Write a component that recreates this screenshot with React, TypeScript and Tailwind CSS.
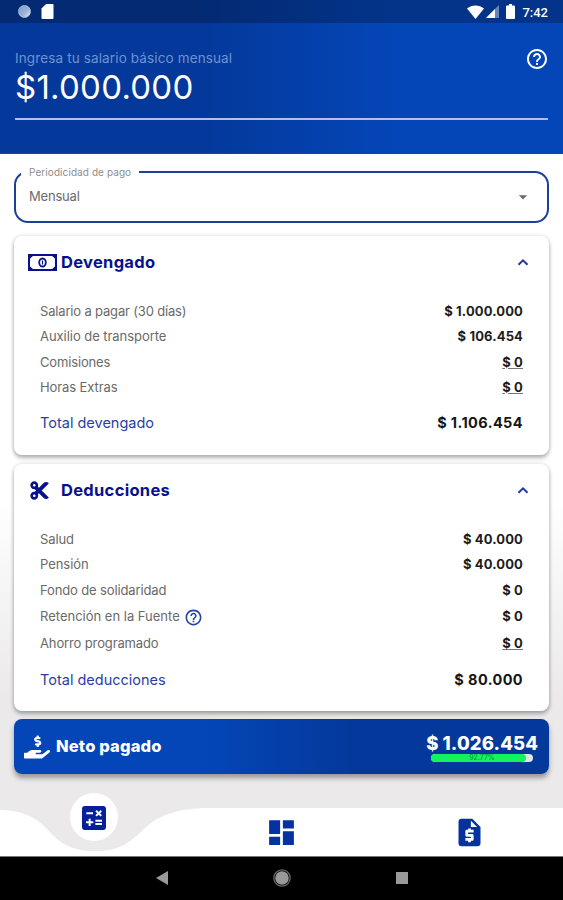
import React from "react";
import clsx from "clsx";
import { FaCut, FaHandHoldingUsd } from "react-icons/fa";
import {
  MdArrowDropDown,
  MdCalculate,
  MdDashboard,
  MdHelpOutline,
  MdRequestQuote,
} from "react-icons/md";

type Item = {
  label: string;
  value: string;
  link?: boolean;
  help?: boolean;
  height: string;
  tracking: string;
};

const earnings: Item[] = [
  { label: "Salario a pagar (30 días)", value: "$ 1.000.000", height: "h-[25px]", tracking: "tracking-[-0.17px]" },
  { label: "Auxilio de transporte", value: "$ 106.454", height: "h-[26px]", tracking: "tracking-[-0.05px]" },
  { label: "Comisiones", value: "$ 0", link: true, height: "h-[25px]", tracking: "tracking-[-0.15px]" },
  { label: "Horas Extras", value: "$ 0", link: true, height: "h-[25px]", tracking: "tracking-[-0.1px]" },
];

const deductions: Item[] = [
  { label: "Salud", value: "$ 40.000", height: "h-[25px]", tracking: "tracking-[-0.1px]" },
  { label: "Pensión", value: "$ 40.000", height: "h-[26px]", tracking: "tracking-[-0.05px]" },
  { label: "Fondo de solidaridad", value: "$ 0", height: "h-[25px]", tracking: "tracking-[-0.13px]" },
  { label: "Retención en la Fuente", value: "$ 0", help: true, height: "h-[28px]", tracking: "tracking-[0px]" },
  { label: "Ahorro programado", value: "$ 0", link: true, height: "h-[26px]", tracking: "tracking-[-0.13px]" },
];

export default function App() {
  return (
    <div className="flex h-[900px] w-[563px] flex-col overflow-hidden bg-[linear-gradient(to_bottom,#ffffff_500px,#ebe9ea_700px)] font-['Inter',sans-serif]">
      <Header />

      <main className="flex h-[654px] flex-col px-[14px] pt-[17px]">
        <PeriodSelect />

        <Card
          className="mt-[13px] h-[219px]"
          icon={<MoneyIcon />}
          title="Devengado"
          items={earnings}
          total={{ label: "Total devengado", value: "$ 1.106.454" }}
        />
        <Card
          className="mt-[9px] h-[247px]"
          icon={<FaCut className="ml-[1px] size-[21px]" />}
          title="Deducciones"
          items={deductions}
          total={{ label: "Total deducciones", value: "$ 80.000" }}
        />

        <NetPay />
      </main>

      <BottomNav />
      <AndroidBar />
    </div>
  );
}

const Header = () => {
  return (
    <header className="h-[154px] w-full shrink-0 border-b border-[#1a3fae] bg-[linear-gradient(to_right,#04389a_0%,#04389a_35%,#0446b7_70%,#0446b7_100%)] text-white">
      {/* status bar */}
      <div className="flex h-[23px] items-center bg-black/25 pl-[18px] pr-[15px]">
        <div className="size-[13px] rounded-full border border-[#a9bcdc] bg-[linear-gradient(135deg,#7f9cc8,#9fb3d6_60%,#e8eefa)]" />
        <SdIcon />
        <div className="ml-auto flex items-center">
          <svg className="h-[14px] w-[17px]" viewBox="0 0 17 14">
            <path d="M8.5 14 0 3.6Q3.7.4 8.5.4T17 3.6Z" fill="currentColor" />
          </svg>
          <svg className="ml-[2px] h-[13px] w-[13px]" viewBox="0 0 13 13">
            <path d="M0 13 13 0v13Z" fill="currentColor" opacity=".4" />
            <path d="M0 13 9 4v9Z" fill="currentColor" />
          </svg>
          <svg className="ml-[7px] h-[15px] w-[9px]" viewBox="0 0 9 15">
            <path d="M3 0h3v1.5h2a1 1 0 0 1 1 1V14a1 1 0 0 1-1 1H1a1 1 0 0 1-1-1V2.500a1 1 0 0 1 1-1h2Z" fill="currentColor" />
          </svg>
          <span className="ml-[7px] pt-[2px] font-['Roboto',sans-serif] text-[13px] leading-none font-medium">7:42</span>
        </div>
      </div>

      {/* salary */}
      <div className="mx-[15px] flex h-[97px] justify-between border-b-2 border-[#b5bdf0]">
        <div className="flex flex-col pt-[27px]">
          <span className="text-[13.5px] leading-[17px] tracking-[0.13px] text-[#6f92d0]">
            Ingresa tu salario básico mensual
          </span>
          <span className="mt-[2px] text-[33px] leading-[36px] tracking-[0.25px]">$1.000.000</span>
        </div>
        <MdHelpOutline className="mt-[24px] -mr-[1px] size-[24px]" />
      </div>
    </header>
  );
};

const PeriodSelect = () => {
  return (
    <div className="relative flex h-[52px] w-full shrink-0 items-center rounded-[14px] border-2 border-[#1d3f9c] bg-white pl-[13px] pr-[14px] text-[#6c6c6c]">
      <span className="absolute -top-[7px] left-[5px] bg-white pl-[8px] pr-[8px] text-[10px] leading-[12px] tracking-[0.08px] text-[#8d8d8d]">
        Periodicidad de pago
      </span>
      <span className="text-[13px] tracking-[-0.2px]">Mensual</span>
      <MdArrowDropDown className="ml-auto size-[20px]" />
    </div>
  );
};

type CardProps = {
  className: string;
  icon: React.ReactNode;
  title: string;
  items: Item[];
  total: { label: string; value: string };
};

const Card = ({ className, icon, title, items, total }: CardProps) => {
  return (
    <section
      className={clsx(
        "w-full shrink-0 rounded-[8px] bg-white shadow-[0_3px_4px_rgba(0,0,0,0.28),0_0_4px_rgba(0,0,0,0.14)]",
        className
      )}
    >
      <div className="flex h-[52px] items-center pl-[14px] pr-[20px] text-[#07118c]">
        <div className="flex w-[33px] items-center">{icon}</div>
        <h2 className="text-[16.5px] font-bold tracking-[0.3px]">{title}</h2>
        <svg className="ml-auto h-[8px] w-[12px]" viewBox="0 0 12 8" fill="none" stroke="#2438a0" strokeWidth="2">
          <path d="m1.500 6.800 4.500-4.500 4.500 4.500" />
        </svg>
      </div>

      <div className="pt-[11px] pr-[26px] pl-[26px]">
        {items.map((item) => (
          <div key={item.label} className={clsx("flex items-center", item.height)}>
            <span className={clsx("text-[13px] text-[#6a6a6a]", item.tracking)}>{item.label}</span>
            {item.help && <MdHelpOutline className="ml-[4px] size-[19px] text-[#2341a8]" />}
            <span
              className={clsx(
                "ml-auto text-[13px] font-bold tracking-[0.13px] text-[#1c1c1c]",
                item.link && "underline decoration-[#777] decoration-1 underline-offset-1"
              )}
            >
              {item.value}
            </span>
          </div>
        ))}

        <div className="mt-[10px] flex h-[25px] items-center justify-between">
          <span className="text-[14.5px] text-[#2a3f9f]">{total.label}</span>
          <span className="text-[14.5px] font-bold tracking-[0.4px] text-[#151515]">{total.value}</span>
        </div>
      </div>
    </section>
  );
};

const NetPay = () => {
  const percent = 92.77;

  return (
    <section className="mt-[8px] flex h-[55px] w-full shrink-0 items-center rounded-[8px] bg-[linear-gradient(to_right,#0446b7_35%,#04389a_65%)] pr-[11px] pl-[10px] text-white shadow-[0_4px_5px_rgba(0,0,0,0.35)]">
      <FaHandHoldingUsd className="mt-[1px] size-[26px]" />
      <span className="ml-[6px] text-[16.5px] font-extrabold tracking-[0.15px]">Neto pagado</span>
      <div className="ml-auto flex flex-col items-end">
        <span className="mt-[2px] text-[18.5px] leading-[20px] font-extrabold tracking-[0.1px]">$ 1.026.454</span>
        <div className="relative mt-[1px] mr-[5px] h-[8px] w-[102px] overflow-hidden rounded-full bg-[#dfe6e6]">
          <div className="h-full rounded-full bg-[#12f35d]" style={{ width: `${percent}%` }} />
          <span className="absolute inset-0 text-center text-[7px] leading-[8px] text-[#168a43]">{percent}%</span>
        </div>
      </div>
    </section>
  );
};

const BottomNav = () => {
  return (
    <nav className="relative h-[48px] w-full shrink-0 text-[#0532a0]">
      <svg className="absolute inset-0 h-full w-full" viewBox="0 0 563 48" preserveAspectRatio="none">
        <path d="M0 2C20 2 35 8 47 21C60 36 72 43 96 43C121 43 130 33 141 24C157 7 176 1 205 0H563V48H0Z" fill="white" />
      </svg>
      <div className="absolute -top-[15px] left-[70px] flex size-[48px] items-center justify-center rounded-full bg-white text-[#04209a]">
        <MdCalculate className="mt-[1px] size-[32px]" />
      </div>
      <div className="relative grid h-full grid-cols-3 items-center justify-items-center">
        <span />
        <MdDashboard className="size-[33px]" />
        <MdRequestQuote className="size-[33px]" />
      </div>
    </nav>
  );
};

const AndroidBar = () => {
  return (
    <div className="flex h-[44px] w-full shrink-0 items-center justify-center border-t border-[#777] bg-black pb-[2px] text-[#999]">
      <svg className="h-[14px] w-[12px]" viewBox="0 0 12 14">
        <path d="M12 0v14L0 7Z" fill="currentColor" />
      </svg>
      <svg className="ml-[105px] size-[18px]" viewBox="0 0 18 18">
        <circle cx="9" cy="9" r="8.200" fill="none" stroke="currentColor" strokeWidth="1.200" opacity=".7" />
        <circle cx="9" cy="9" r="6.800" fill="currentColor" />
      </svg>
      <div className="ml-[105px] size-[12px] bg-[#999]" />
    </div>
  );
};

const SdIcon = () => {
  return (
    <svg className="ml-[10px] h-[15px] w-[13px]" viewBox="0 0 12 15">
      <path d="M4.500 0H11a1 1 0 0 1 1 1v13a1 1 0 0 1-1 1H1a1 1 0 0 1-1-1V4.500Z" fill="currentColor" />
    </svg>
  );
};

// banknote with notched inner corners
const MoneyIcon = () => {
  return (
    <svg className="h-[17px] w-[29px]" viewBox="0 0 29 17" fill="none" stroke="currentColor">
      <path d="M1 1h27v15H1Z" strokeWidth="2" />
      <path d="M1 1h5L1 5.500ZM28 1h-5l5 4.500ZM1 16h5l-5-4.500ZM28 16h-5l5-4.500Z" fill="currentColor" stroke="none" />
      <ellipse cx="14.500" cy="8.500" rx="3.300" ry="4" strokeWidth="1.800" />
      <path d="M14.500 6.500v4" strokeWidth="1.200" />
    </svg>
  );
};
